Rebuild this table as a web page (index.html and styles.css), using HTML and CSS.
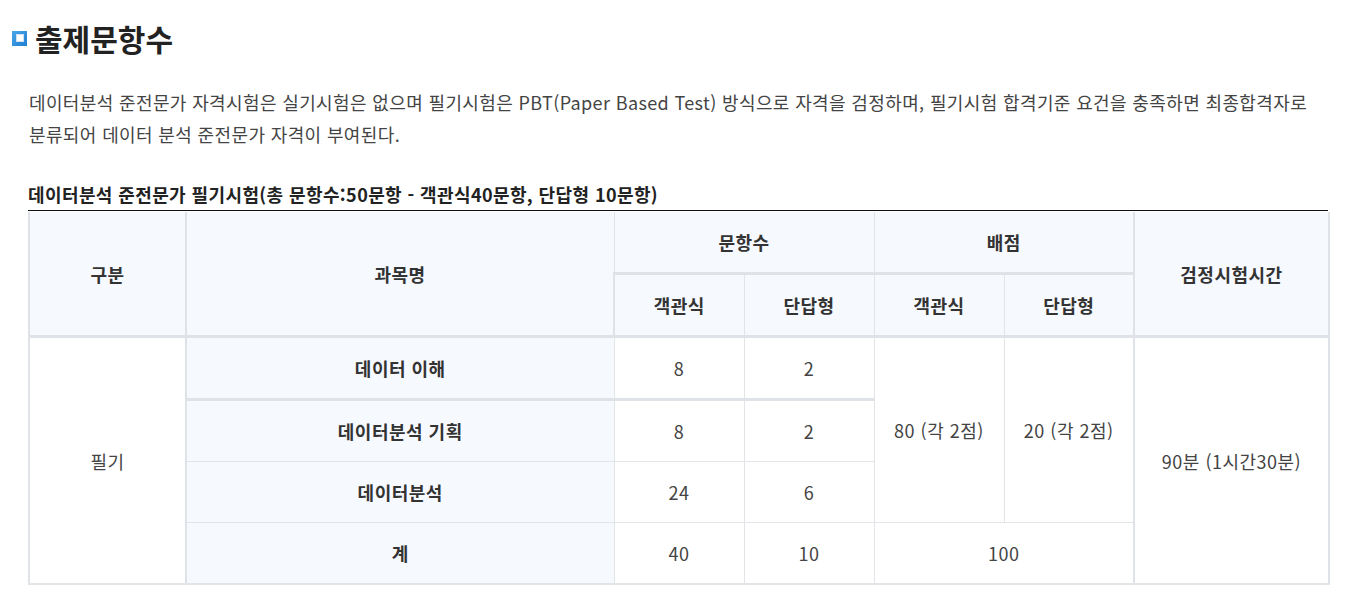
FILE: index.html
```html
<!DOCTYPE html>
<html lang="ko">
<head>
<meta charset="utf-8">
<link rel="stylesheet" href="styles.css">
</head>
<body>
<div class="page">
  <h2 class="title">
    <span class="bullet"><span class="bullet-in"></span></span>
    출제문항수
  </h2>
  <p class="desc">데이터분석 준전문가 자격시험은 실기시험은 없으며 필기시험은 PBT(Paper Based Test) 방식으로 자격을 검정하며, 필기시험 합격기준 요건을 충족하면 최종합격자로 분류되어 데이터 분석 준전문가 자격이 부여된다.</p>
  <p class="caption">데이터분석 준전문가 필기시험(총 문항수:50문항 - 객관식40문항, 단답형 10문항)</p>
  <div class="table-wrap">
    <table class="exam">
      <colgroup>
        <col class="c-gubun">
        <col class="c-name">
        <col class="c-num">
        <col class="c-num">
        <col class="c-num">
        <col class="c-num">
        <col class="c-time">
      </colgroup>
      <thead>
        <tr class="h1">
          <th rowspan="2" class="thick-r">구분</th>
          <th rowspan="2">과목명</th>
          <th colspan="2" class="thick-b">문항수</th>
          <th colspan="2" class="thick-b thick-r">배점</th>
          <th rowspan="2" class="last">검정시험시간</th>
        </tr>
        <tr class="h2">
          <th>객관식</th>
          <th>단답형</th>
          <th>객관식</th>
          <th class="thick-r">단답형</th>
        </tr>
      </thead>
      <tbody>
        <tr>
          <td rowspan="4" class="gubun thick-r">필기</td>
          <th class="subj thick-b">데이터 이해</th>
          <td class="thick-b">8</td>
          <td class="thick-b">2</td>
          <td rowspan="3">80 (각 2점)</td>
          <td rowspan="3" class="thick-r">20 (각 2점)</td>
          <td rowspan="4" class="last">90분 (1시간30분)</td>
        </tr>
        <tr>
          <th class="subj">데이터분석 기획</th>
          <td>8</td>
          <td>2</td>
        </tr>
        <tr>
          <th class="subj">데이터분석</th>
          <td>24</td>
          <td>6</td>
        </tr>
        <tr>
          <th class="subj">계</th>
          <td>40</td>
          <td>10</td>
          <td colspan="2" class="thick-r">100</td>
        </tr>
      </tbody>
    </table>
  </div>
</div>
</body>
</html>
```

FILE: styles.css
```css
html, body {
  margin: 0;
  padding: 0;
  background: #fff;
}
body {
  font-family: "Malgun Gothic", "Noto Sans CJK KR", "Noto Sans", sans-serif;
  color: #333;
}
.page {
  padding: 14px 18px 0 28px;
}
.title {
  display: flex;
  align-items: center;
  gap: 8px;
  margin: 0 0 0 -16px;
  height: 48px;
  font-size: 30px;
  font-weight: 700;
  color: #222;
  letter-spacing: 0;
}
.bullet {
  width: 15px;
  height: 15px;
  background: linear-gradient(135deg, #4aa7ea, #1f7fd2);
  display: flex;
  align-items: center;
  justify-content: center;
  box-sizing: border-box;
}
.bullet-in {
  width: 8px;
  height: 8px;
  background: #fff;
  border: 1px solid #c9e0f5;
  box-sizing: border-box;
}
.desc {
  margin: 24px 0 0 1px;
  font-size: 18px;
  line-height: 32px;
  color: #444;
  letter-spacing: 0.37px;
  word-break: keep-all;
}
.caption {
  margin: 32px 0 0 0;
  font-size: 18px;
  line-height: 24px;
  font-weight: 700;
  color: #222;
  letter-spacing: 0.4px;
}
.table-wrap {
  margin-top: 4px;
  width: 1300px;
  border-top: 1px solid #111;
  padding-top: 1px;
}
.exam {
  width: 1300px;
  border-collapse: collapse;
  table-layout: fixed;
  font-size: 18px;
  letter-spacing: 0.5px;
  color: #444;
}
.c-gubun { width: 157px; }
.c-name { width: 428px; }
.c-num { width: 130px; }
.c-time { width: 195px; }
.exam th, .exam td {
  border: 1px solid #e2e4e8;
  text-align: center;
  vertical-align: middle;
  padding: 0;
  height: 60px;
}
.exam th {
  background: #f6f9fe;
  font-weight: 700;
  color: #333;
}
.exam thead th {
  font-weight: 600;
}
.exam th:first-child, .exam td:first-child {
  border-left: 2px solid #dfe2e7;
}
.exam .thick-r {
  border-right: 2px solid #dfe2e7;
}
.exam .thick-b {
  border-bottom: 3px solid #dfe2e7;
}
.exam .last {
  border-right: 2px solid #dfe2e7;
}
.exam .h1 th {
  border-top: none;
}
.exam thead tr.h2 th {
  border-bottom: 3px solid #dfe2e7;
}
.exam thead .h1 th[rowspan] {
  border-bottom: 3px solid #dfe2e7;
}
.exam .subj {
  border-left: 2px solid #dfe2e7;
  font-weight: 600;
  color: #333;
}
.exam tbody tr:last-child td, .exam tbody tr:last-child th, .exam .gubun, .exam td.last {
  border-bottom: 2px solid #e2e4e8;
}
.exam td {
  color: #444;
  background: #fff;
}
```
